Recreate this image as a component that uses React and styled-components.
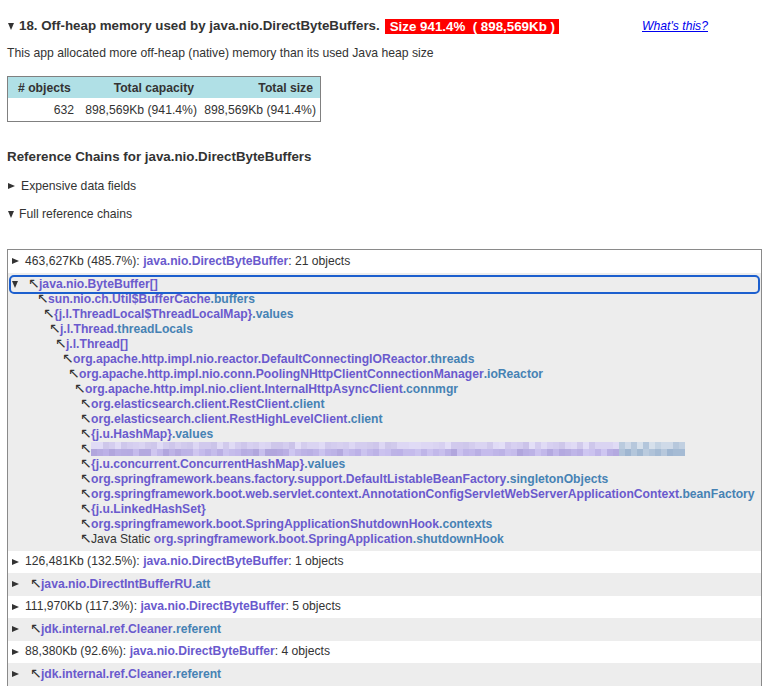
import React from "react";
import styled, { createGlobalStyle } from "styled-components";

const GlobalStyle = createGlobalStyle`
  html, body { margin: 0; padding: 0; background: #fff; }
  body {
    font-family: "Liberation Sans", Arial, "DejaVu Sans", sans-serif;
    font-size: 12.2px;
    color: #333;
    overflow: hidden;
  }
`;

const Page = styled.div`
  padding: 18px 0 0 7px;
`;

const Caret = styled.span`
  display: inline-block;
  flex: none;
  width: 0;
  height: 0;
  ${(p) =>
    p.$open
      ? `border-top: ${p.$size || 7}px solid #333;
         border-left: ${(p.$size || 7) * 0.55}px solid transparent;
         border-right: ${(p.$size || 7) * 0.55}px solid transparent;`
      : `border-left: ${p.$size || 7}px solid #333;
         border-top: ${(p.$size || 7) * 0.5}px solid transparent;
         border-bottom: ${(p.$size || 7) * 0.5}px solid transparent;`}
  margin-right: ${(p) => p.$gap ?? 5}px;
`;

const TitleRow = styled.div`
  display: flex;
  align-items: center;
  width: 700px;
  height: 16px;
  padding-left: 1px;
`;

const Title = styled.h2`
  margin: 0;
  font-size: 13.33px;
  font-weight: bold;
  line-height: 16px;
  color: #333;
  display: flex;
  align-items: center;
`;

const Badge = styled.span`
  margin-left: 5px;
  background: #ff0000;
  color: #fff;
  font-weight: bold;
  font-size: 13.33px;
  line-height: 15px;
  padding: 0 4px 0 5px;
  white-space: pre;
`;

const HelpLink = styled.a`
  margin-left: auto;
  color: #0000ee;
  font-style: italic;
  font-size: 12.2px;
  text-decoration: underline;
`;

const Desc = styled.p`
  margin: 11px 0 0;
  line-height: 16px;
  font-size: 12.2px;
`;

const Summary = styled.table`
  margin-top: 15px;
  border-collapse: collapse;
  border: 1px solid #808080;
  font-size: 12.2px;
`;

const Th = styled.th`
  background: #b0e0e6;
  font-weight: bold;
  text-align: ${(p) => p.$align || "right"};
  padding: ${(p) => (p.$align === "left" ? "0 0 0 10px" : "0 7px 0 0")};
  width: ${(p) => p.$w}px;
  height: 21px;
  white-space: nowrap;
`;

const Td = styled.td`
  text-align: right;
  padding: 0 4px 0 0;
  height: 23px;
  white-space: nowrap;
`;

const SectionHeading = styled.h3`
  margin: 27px 0 0;
  font-size: 13.33px;
  font-weight: bold;
  line-height: 16px;
`;

const Toggle = styled.div`
  display: flex;
  align-items: center;
  line-height: 16px;
  font-size: 12.2px;
  margin-top: ${(p) => p.$mt}px;
  padding-left: 1px;
`;

const ChainBox = styled.div`
  margin-top: 27px;
  width: 753px;
  border: 1px solid #8a8a8a;
  border-bottom: none;
  font-size: 12.15px;
  line-height: 15px;
`;

const Row = styled.div`
  display: flex;
  align-items: center;
  height: 22.5px;
  padding-left: 4px;
  background: ${(p) => (p.$shade ? "#ededed" : "#fff")};
  white-space: nowrap;
`;

const Expanded = styled.div`
  background: #ededed;
  padding: 4px 0 4px;
`;

const ChainLine = styled.div`
  display: flex;
  align-items: center;
  height: 15px;
  white-space: nowrap;
  padding-left: ${(p) => p.$indent}px;
`;

const FocusLine = styled.div`
  display: flex;
  align-items: center;
  height: 15px;
  margin: 0 3px;
  padding-left: 1px;
  outline: 2px solid #1c5fce;
  outline-offset: 0px;
  border-radius: 3px;
  white-space: nowrap;
`;

const Arrow = styled.span`
  font-family: "DejaVu Sans", sans-serif;
  font-size: 14px;
  line-height: 15px;
  height: 15px;
  margin-top: -2px;
  color: #333;
  width: 11px;
  flex: none;
  overflow: visible;
`;

const Cls = styled.span`
  font-weight: bold;
  color: #6a5acd;
`;

const Field = styled.span`
  font-weight: bold;
  color: #4682b4;
`;

const Plain = styled.span`
  color: #333;
  white-space: pre;
`;

const BlurWrap = styled.div`
  display: grid;
  grid-template-columns: repeat(99, 6px);
  grid-auto-rows: 7px;
`;

const BlurCell = styled.div``;

function rand(seed) {
  let s = seed;
  return () => {
    s = (s * 9301 + 49297) % 233280;
    return s / 233280;
  };
}

function Blurred() {
  const r = rand(17);
  const cells = [];
  for (let row = 0; row < 2; row++) {
    for (let c = 0; c < 99; c++) {
      const v = r();
      let color;
      if (c >= 88) {
        const l = row === 0 ? 0.78 + v * 0.1 : 0.7 + v * 0.12;
        color = `hsl(212, 35%, ${Math.round(l * 100)}%)`;
      } else {
        const l = row === 0 ? 0.84 + v * 0.08 : 0.76 + v * 0.1;
        color = `hsl(252, ${Math.round(45 + v * 15)}%, ${Math.round(l * 100)}%)`;
      }
      cells.push(<BlurCell key={row + "-" + c} style={{ background: color }} />);
    }
  }
  return <BlurWrap>{cells}</BlurWrap>;
}

const chain = [
  { cls: "sun.nio.ch.Util$BufferCache", field: "buffers" },
  { cls: "{j.l.ThreadLocal$ThreadLocalMap}", field: "values" },
  { cls: "j.l.Thread", field: "threadLocals" },
  { cls: "j.l.Thread[]" },
  { cls: "org.apache.http.impl.nio.reactor.DefaultConnectingIOReactor", field: "threads" },
  { cls: "org.apache.http.impl.nio.conn.PoolingNHttpClientConnectionManager", field: "ioReactor" },
  { cls: "org.apache.http.impl.nio.client.InternalHttpAsyncClient", field: "connmgr" },
  { cls: "org.elasticsearch.client.RestClient", field: "client" },
  { cls: "org.elasticsearch.client.RestHighLevelClient", field: "client" },
  { cls: "{j.u.HashMap}", field: "values" },
  { blur: true },
  { cls: "{j.u.concurrent.ConcurrentHashMap}", field: "values" },
  { cls: "org.springframework.beans.factory.support.DefaultListableBeanFactory", field: "singletonObjects" },
  {
    cls: "org.springframework.boot.web.servlet.context.AnnotationConfigServletWebServerApplicationContext",
    field: "beanFactory",
  },
  { cls: "{j.u.LinkedHashSet}" },
  { cls: "org.springframework.boot.SpringApplicationShutdownHook", field: "contexts" },
  { prefix: "Java Static ", cls: "org.springframework.boot.SpringApplication", field: "shutdownHook" },
];

function Ref({ item }) {
  if (item.blur) return <Blurred />;
  return (
    <>
      {item.prefix && <Plain>{item.prefix}</Plain>}
      <Cls>{item.cls}</Cls>
      {item.field && <Field>.{item.field}</Field>}
    </>
  );
}

function SummaryRow({ shade, size, pct, count }) {
  return (
    <Row $shade={shade}>
      <Caret $size={7} $gap={6} />
      <Plain>{`${size} (${pct}): `}</Plain>
      <Cls>java.nio.DirectByteBuffer</Cls>
      <Plain>{`: ${count} objects`}</Plain>
    </Row>
  );
}

function RefRow({ shade, cls, field }) {
  return (
    <Row $shade={shade}>
      <Caret $size={7} $gap={11} />
      <Arrow>↖</Arrow>
      <Cls>{cls}</Cls>
      <Field>.{field}</Field>
    </Row>
  );
}

export default function App() {
  return (
    <>
      <GlobalStyle />
      <Page>
        <TitleRow>
          <Title>
            <Caret $open $size={7} $gap={5} />
            18. Off-heap memory used by java.nio.DirectByteBuffers.
          </Title>
          <Badge>{"Size 941.4%  ( 898,569Kb )"}</Badge>
          <HelpLink href="#">What's this?</HelpLink>
        </TitleRow>
        <Desc>This app allocated more off-heap (native) memory than its used Java heap size</Desc>
        <Summary>
          <thead>
            <tr>
              <Th $align="left" $w={60}>{"# objects"}</Th>
              <Th $w={116}>Total capacity</Th>
              <Th $w={112}>Total size</Th>
            </tr>
          </thead>
          <tbody>
            <tr>
              <Td>632</Td>
              <Td>898,569Kb (941.4%)</Td>
              <Td>898,569Kb (941.4%)</Td>
            </tr>
          </tbody>
        </Summary>
        <SectionHeading>Reference Chains for java.nio.DirectByteBuffers</SectionHeading>
        <Toggle $mt={13}>
          <Caret $size={7} $gap={6} />
          Expensive data fields
        </Toggle>
        <Toggle $mt={12}>
          <Caret $open $size={7} $gap={5} />
          Full reference chains
        </Toggle>
        <ChainBox>
          <SummaryRow size="463,627Kb" pct="485.7%" count={21} />
          <Expanded>
            <FocusLine>
              <Caret $open $size={7} $gap={10} />
              <Arrow>↖</Arrow>
              <Cls>java.nio.ByteBuffer[]</Cls>
            </FocusLine>
            {chain.map((item, i) => (
              <ChainLine key={i} $indent={23 + Math.round(6.1 * Math.min(i + 1, 8))}>
                <Arrow>↖</Arrow>
                <Ref item={item} />
              </ChainLine>
            ))}
          </Expanded>
          <SummaryRow size="126,481Kb" pct="132.5%" count={1} />
          <RefRow shade cls="java.nio.DirectIntBufferRU" field="att" />
          <SummaryRow size="111,970Kb" pct="117.3%" count={5} />
          <RefRow shade cls="jdk.internal.ref.Cleaner" field="referent" />
          <SummaryRow size="88,380Kb" pct="92.6%" count={4} />
          <RefRow shade cls="jdk.internal.ref.Cleaner" field="referent" />
        </ChainBox>
      </Page>
    </>
  );
}
